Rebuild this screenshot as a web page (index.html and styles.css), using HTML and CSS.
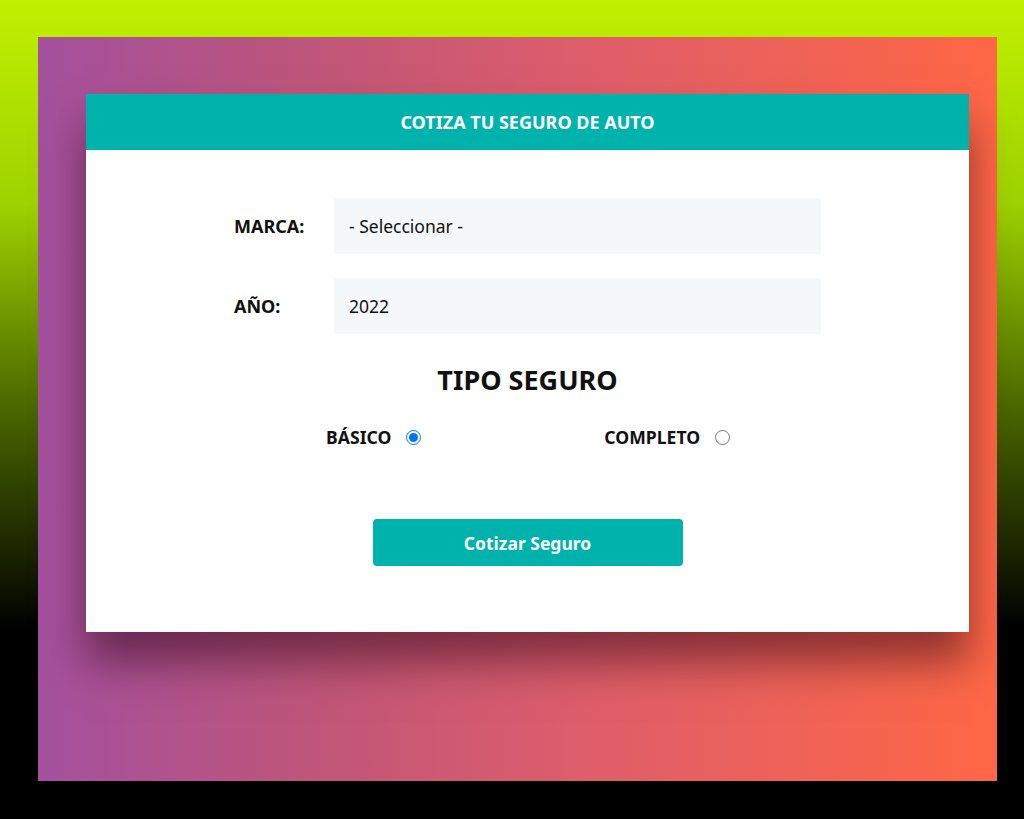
FILE: index.html
```html
<!DOCTYPE html>
<html lang="es">
<head>
<meta charset="utf-8">
<title>Cotizador de Seguros</title>
<link rel="stylesheet" href="styles.css">
</head>
<body>
<div class="stage">
  <div class="card">
    <header class="card-header">COTIZA TU SEGURO DE AUTO</header>
    <form class="form">
      <div class="field">
        <label class="field-label">MARCA:</label>
        <div class="field-input">- Seleccionar -</div>
      </div>
      <div class="field">
        <label class="field-label">AÑO:</label>
        <div class="field-input">2022</div>
      </div>
      <h2 class="section-title">TIPO SEGURO</h2>
      <div class="options">
        <label class="option">BÁSICO <input type="radio" name="plan" checked></label>
        <label class="option">COMPLETO <input type="radio" name="plan"></label>
      </div>
      <div class="actions">
        <button type="button" class="btn">Cotizar Seguro</button>
      </div>
    </form>
  </div>
</div>
</body>
</html>
```
FILE: styles.css
```css
* { box-sizing: border-box; }
html, body { margin: 0; padding: 0; }
body {
  width: 1024px;
  height: 819px;
  overflow: hidden;
  background: linear-gradient(to bottom, #c0f000 0%, #9ed200 25%, #4a6600 50%, #000 77%, #000 100%);
  font-family: "Noto Sans", "Open Sans", sans-serif;
  padding-top: 37px;
  padding-left: 38px;
}
.stage {
  width: 959px;
  height: 744px;
  background: linear-gradient(to right, #a4509e 0%, #c05678 30%, #dc5d6c 55%, #ff6745 100%);
  padding-top: 57px;
  padding-left: 48px;
}
.card {
  width: 883px;
  height: 538px;
  background: #fff;
  box-shadow: 0 30px 40px rgba(40, 0, 20, 0.5);
}
.card-header {
  height: 56px;
  background: #00b2ac;
  color: #fff;
  font-weight: 700;
  font-size: 18px;
  display: flex;
  align-items: center;
  justify-content: center;
}
.form {
  width: 587px;
  margin: 48px auto 0;
}
.field {
  display: flex;
  align-items: center;
  margin-bottom: 24px;
}
.field-label {
  width: 100px;
  font-weight: 700;
  font-size: 18px;
  color: #111;
}
.field-input {
  flex: 1;
  height: 56px;
  background: #f5f8fb;
  display: flex;
  align-items: center;
  padding-left: 15px;
  font-size: 17.5px;
  color: #111;
}
.section-title {
  margin: 28px 0 0;
  text-align: center;
  font-size: 27px;
  font-weight: 700;
  line-height: 36px;
  color: #111;
}
.options {
  display: grid;
  grid-template-columns: 1fr 1fr;
  margin-top: 27px;
  line-height: 24px;
}
.option {
  display: flex;
  align-items: center;
  justify-content: center;
  font-weight: 700;
  font-size: 17.6px;
  color: #111;
  gap: 15px;
  padding-right: 14px;
}
.option input {
  width: 15px;
  height: 15px;
  margin: 0;
}
.actions {
  display: flex;
  justify-content: center;
  margin-top: 70px;
}
.btn {
  width: 310px;
  height: 47px;
  border: 0;
  border-radius: 4px;
  background: #00b2ac;
  color: #fff;
  font-family: inherit;
  font-weight: 700;
  font-size: 17.5px;
  cursor: pointer;
}
```
